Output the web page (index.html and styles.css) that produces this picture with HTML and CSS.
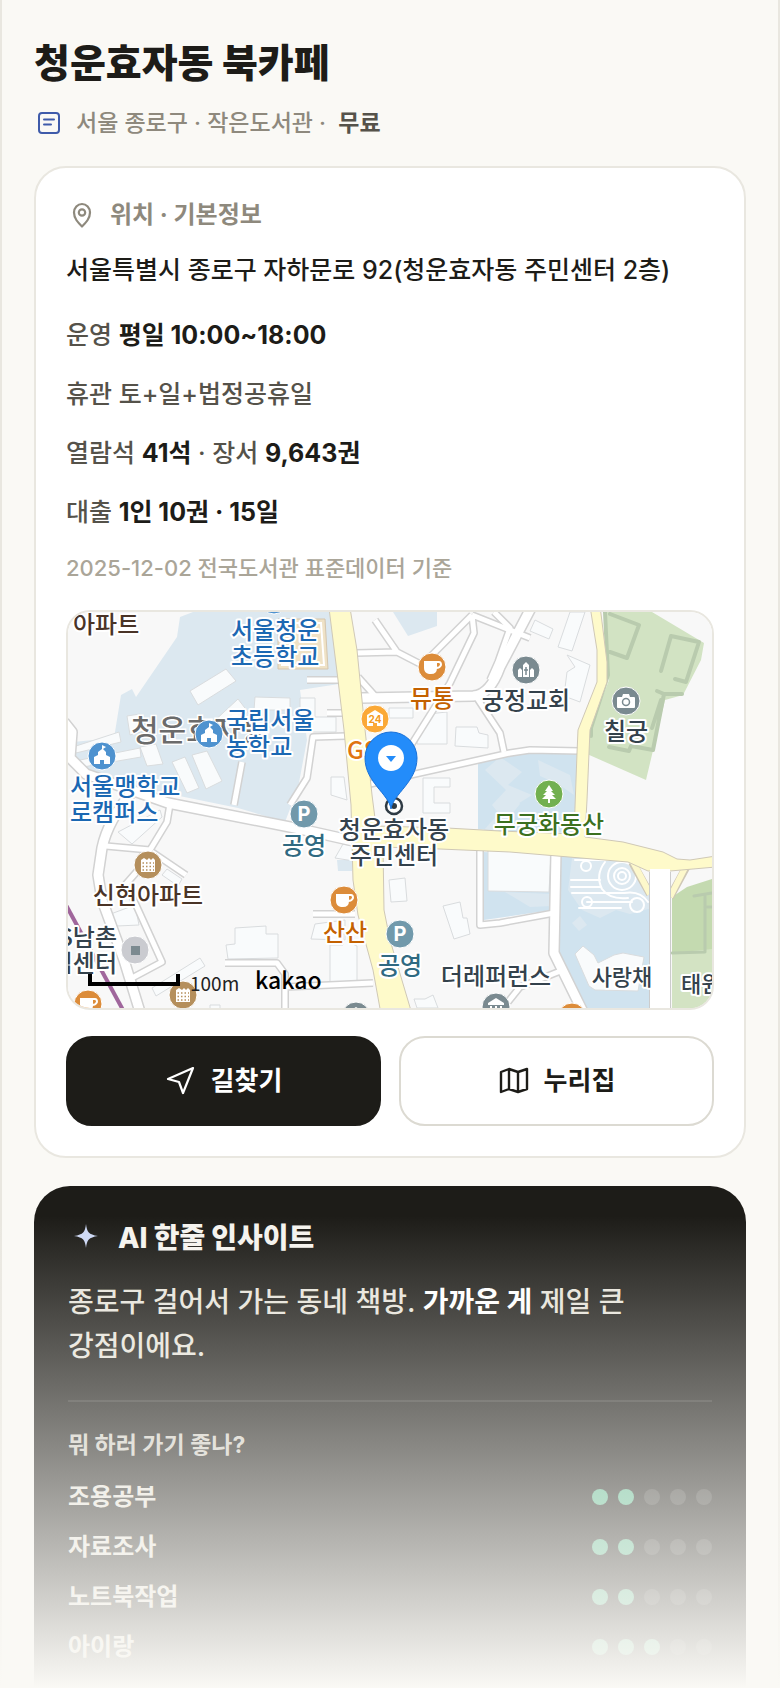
FILE: index.html
```html
<!DOCTYPE html>
<html lang="ko">
<head>
  <meta charset="UTF-8">
  <title>청운효자동 북카페</title>
  <meta name="viewport" content="width=device-width, initial-scale=1.0">
  <link rel="stylesheet" href="styles.css">
</head>
<body>
  <main class="page">
    <h1>청운효자동 북카페</h1>
    <p class="sub">
      <svg class="sub-icon" viewBox="0 0 30 30" fill="none" stroke="currentColor" stroke-width="2" stroke-linecap="round">
        <rect x="5" y="5" width="20" height="20" rx="3"/>
        <path d="M10 11.5h10M10 16.5h7"/>
      </svg>
      <span>서울 종로구 · 작은도서관 · <b>무료</b></span>
    </p>

    <section class="card">
      <h2 class="card-title">
        <svg viewBox="0 0 32 32" fill="none" stroke="currentColor" stroke-width="2.2" stroke-linejoin="round">
          <path d="M16 27.5C12 23.500 8 19.500 8 13.500a8 8.500 0 0 1 16 0C24 19.500 20 23.500 16 27.500z"/>
          <circle cx="16" cy="13.500" r="3.200"/>
        </svg>
        위치 · 기본정보
      </h2>
      <p class="address">서울특별시 종로구 자하문로 92(청운효자동 주민센터 2층)</p>
      <div class="info">
        <p>운영 <b>평일 10:00~18:00</b></p>
        <p>휴관 토+일+법정공휴일</p>
        <p>열람석 <b>41석</b> · 장서 <b>9,643권</b></p>
        <p>대출 <b>1인 10권 · 15일</b></p>
      </div>
      <p class="source">2025-12-02 전국도서관 표준데이터 기준</p>

      <div class="map">
        <svg viewBox="8 12 644 396" preserveAspectRatio="xMidYMid slice">
          <defs>
            <g id="lanes">
              <path d="M182 162L174 205M247 80H282M267 113H285M286 136L253 137L247 178L230 205"/>
              <path d="M296 53L337 52L368 68M315 20L337 52M412 15L365 62M412 15L414 33L390 83L343 158M412 15L470 38M298 77L315 96"/>
              <path d="M434 12L450 28L438 62L430 80M417 98L440 133L444 152"/>
              <path d="M46 246L90 250L107 222L110 204M92 252L126 275M80 268L66 284L76 305L102 362L72 378"/>
              <path d="M253 314H295M165 363H217L225 374V408M225 387L313 383"/>
              <path d="M420 248V325L440 323L494 313M448 402L460 387L503 370"/>
              <path d="M310 184L450 153L470 150L520 151"/>
            </g>
            <g id="streets">
              <path d="M4 122L12 132L10 158L26 174L60 186L108 203L240 229L298 242"/>
              <path d="M72 192Q48 220 42 248L38 275L42 300L64 360L80 412"/>
              <path d="M472 6L440 67Q430 95 413 96L301 98M496 252L494 353L523 412"/>
            </g>
            <path id="avenue" d="M269 8L278 80L284 130L291 205L293 280L298 315L313 370L321 414H352L330 340L324 310L323 247L380 249L450 252L568 262L588 271H610L656 267V256L630 260L617 259L603 252L563 242L525 237L527 200L529 153L530 130L547 82V62L540 6H530L537 50L537 82L518 130L517 153L514 234L440 231L387 228L316 226L312 195L304 120L297 50L290 8Z"/>
            <g id="school">
              <circle class="pin" r="14" fill="#4e92cf"/>
              <path fill="#fff" d="M-8 8V1L-4-1V-4L0-7V-11L4-9L1-7V-7L4-4V-1L8 1V8H2V4H-2V8Z"/>
            </g>
            <g id="coffee">
              <circle class="pin" r="14" fill="#dc8c3a"/>
              <path fill="#fff" d="M-8-6H5V1Q5 7-1 7H-3Q-8 6-8 1Z"/>
              <path fill="none" stroke="#fff" stroke-width="2" d="M4-5H7Q9-5 9-2Q8 1 4 1"/>
            </g>
            <g id="apartment">
              <circle class="pin" r="14" fill="#b58f5c"/>
              <path fill="#fff" d="M-7 7V-5L-4-7L-1-5L1-7L3-5L5-7L7-5V7Z"/>
              <path stroke="#b58f5c" stroke-width="1.500" stroke-dasharray="1.500 2" d="M-5.500-2H6M-5.500 1.500H6M-5.500 5H6"/>
            </g>
            <g id="museum">
              <circle class="pin" r="14" fill="#7a8a90"/>
              <path fill="#fff" d="M-8-4L0-9L8-4V-2H-8ZM-6-1H-4V5H-6ZM-1-1H1V5H-1ZM4-1H6V5H4ZM-8 5H8V7H-8Z"/>
            </g>
          </defs>

          <rect x="8" y="12" width="644" height="396" fill="#f8f8f8"/>

          <!-- 학교, 공원 부지 -->
          <g fill="#dce8f0">
            <path d="M133 12L120 17L117 37L76 97L72 89L61 95L54 138L13 142L14 165L30 178L100 192L178 208L225 222L238 188L247 140L240 90L279 84L270 12Z"/>
            <path d="M333 12H377V26L348 36ZM277 260H292V271H278Z"/>
          </g>
          <g fill="#d0e3ef">
            <path d="M418 159L455 154H517L514 233L440 231L418 229Z"/>
            <path d="M424 252L493 256L492 310L424 320Z"/>
            <path d="M500 255L568 262L592 295V408H522L498 353Z"/>
          </g>
          <g fill="#dce8f0">
            <path d="M440 157L462 172L448 185L472 195L440 215L432 205L446 190L425 170ZM478 160L510 175L514 195L498 184L480 176ZM424 230L455 195L460 204L438 231Z"/>
            <path d="M512 258L568 262L592 295V308L570 314L556 310L540 318L522 310L508 290ZM512 323L520 316L527 325L519 331ZM445 292L492 294V306L470 307Z"/>
          </g>
          <path fill="#d2e3c3" d="M544 12H592L644 43L641 60L623 95L605 100L586 180L527 154L530 130L549 80Z"/>
          <path fill="#c4dab0" d="M612 297L627 287L652 279V408H612Z"/>
          <path fill="#d3e3c3" d="M612 353L652 349V408H612Z"/>
          <g fill="none" stroke="#b9cbae" stroke-width="4" stroke-linecap="round" stroke-linejoin="round">
            <path d="M545 12L548 75L531 128V136M550 14L579 25L567 58L550 52"/>
            <path d="M601 71L611 36L639 42L626 82L615 79M597 91L604 94L622 94M604 94L593 150L571 146L569 151L549 147M601 100L592 128"/>
            <path stroke-width="3" d="M634 296L652 293M645 296V352L612 353M646 307H652"/>
          </g>
          <path fill="#efe2c6" stroke="#d5c6ae" d="M218 19H265L268 69H218Z"/>
          <path fill="none" stroke="#fff" stroke-width="2" d="M222 23H261L264 65H222Z"/>

          <!-- 건물 -->
          <g fill="#f9fbfc" stroke="#d9dcde" stroke-width="1">
            <path d="M130 91L166 69L176 81L138 105ZM195 97L230 98V110H194ZM150 125L178 99L188 112L155 135ZM67 116L80 114L84 131L70 135ZM80 147L96 144L103 164L87 166ZM112 162L125 157L139 188L127 193ZM132 155L147 151L162 181L146 189ZM13 147L59 132L61 142L16 153ZM20 160L80 148L81 157L23 167Z"/>
            <path d="M240 98H255V117H276V132H240ZM329 108H353V118H329ZM357 138L368 114L387 112V144H357ZM396 127H417L419 133L428 135V148L395 146ZM271 177H284L287 200L271 195ZM363 178H390V187H374V203H390V213H363ZM470 31L475 20L493 29L489 39ZM498 47L510 12H525L512 51ZM507 55L530 65L520 102L504 96L507 72L515 67Z"/>
            <path d="M58 232L100 210L102 217L72 244ZM102 275L107 269L122 279L118 286ZM48 315L75 305L79 325L57 326ZM166 345L175 344V328L206 326V334H218V358L168 359ZM92 388L140 358L145 366L96 396ZM270 345H283V334H288V342L297 346V382H270ZM329 280L345 278L347 301L331 302ZM383 306L400 302L403 318H407L410 334L394 339ZM251 339L255 324L285 320V340ZM275 258L283 244L302 248L300 262ZM428 250L491 254L489 292L428 291ZM515 354L523 346L534 355L538 363L554 355L563 353L584 357L578 391L535 390L529 386ZM354 399H365L373 395L378 408H357ZM150 405H160V412H150Z"/>
          </g>
          <g fill="none" stroke="#fff" stroke-width="2" stroke-linecap="round">
            <path d="M515 260H560M511 280H540M511 287H540M512 293H564M527 302H572M519 308H561M564 293Q580 290 588 302"/>
            <circle cx="526" cy="266" r="5"/>
            <circle cx="527" cy="302" r="5"/>
            <circle cx="577" cy="305" r="7"/>
            <circle cx="562" cy="276" r="4"/>
            <circle cx="562" cy="276" r="8"/>
            <circle cx="562" cy="276" r="14"/>
            <path d="M545 262Q535 275 542 289Q550 300 568 298"/>
          </g>

          <!-- 도로 -->
          <g fill="none" stroke-linejoin="round">
            <use href="#lanes" stroke="#d2d2d2" stroke-width="8"/>
            <use href="#streets" stroke="#d2d2d2" stroke-width="12"/>
            <use href="#lanes" stroke="#fff" stroke-width="5"/>
            <use href="#streets" stroke="#fff" stroke-width="9"/>
            <path stroke="#cfc8b6" stroke-width="8" d="M572 262L590 294M628 264L610 297"/>
            <path stroke="#fdf8cb" stroke-width="6" d="M572 260L590 294M628 262L610 297"/>
            <use href="#avenue" fill="#fefaca" stroke="#cfc8b6"/>
            <path stroke="#ccc" stroke-width="22" d="M600 272V410"/>
            <path stroke="#fff" stroke-width="20" d="M600 269V410"/>
            <path stroke="#a0669c" stroke-width="4" d="M6 305L63 410"/>
          </g>

          <text class="district" x="71" y="141">청운효자동</text>

          <!-- 장소 아이콘 -->
          <use href="#school" x="214" y="0"/>
          <use href="#school" x="149" y="134"/>
          <use href="#school" x="42" y="156"/>
          <use href="#coffee" x="372" y="67"/>
          <use href="#coffee" x="284" y="300"/>
          <use href="#coffee" x="28" y="404"/>
          <use href="#coffee" x="512" y="417"/>
          <use href="#apartment" x="88" y="265"/>
          <use href="#apartment" x="123" y="395"/>
          <use href="#museum" x="436" y="407"/>
          <use href="#museum" x="296" y="416"/>
          <g transform="translate(244 214)">
            <circle class="pin" r="14" fill="#7199ab"/>
            <text class="parking" y="7">P</text>
          </g>
          <g transform="translate(340 334)">
            <circle class="pin" r="14" fill="#7199ab"/>
            <text class="parking" y="7">P</text>
          </g>
          <g transform="translate(315 119)">
            <circle class="pin" r="14" fill="#fba937"/>
            <path fill="#fff" d="M-8-4L0-9L8-4V7H2V4H-2V7H-8Z"/>
            <text class="hours" y="4">24</text>
          </g>
          <g transform="translate(466 70)">
            <circle class="pin" r="14" fill="#7a8a90"/>
            <path fill="#fff" d="M-8 7V0L-6-2L-4 0V7ZM4 7V0L6-2L8 0V7ZM-3 7V-5L0-8L3-5V7Z"/>
            <path stroke="#7a8a90" stroke-width="1.500" d="M0-3V5M-2 0H2"/>
          </g>
          <g transform="translate(566 101)">
            <circle class="pin" r="14" fill="#7a8a90"/>
            <path fill="#fff" d="M-8-4H-4L-3-7H3L4-4H8Q9-4 9-3V6Q9 7 8 7H-8Q-9 7-9 6V-3Q-9-4-8-4Z"/>
            <circle cy="1" r="3.500" fill="none" stroke="#7a8a90" stroke-width="1.500"/>
          </g>
          <g transform="translate(489 194)">
            <circle class="pin" r="14" fill="#72b050"/>
            <path fill="#fff" d="M0-9L4-3H2L6 1H3L7 5H1V9H-1V5H-7L-3 1H-6L-2-3H-4Z"/>
          </g>
          <g transform="translate(75 350)">
            <circle class="pin" r="14" fill="#cacbd0"/>
            <path fill="#7c8a90" d="M-4-4H5V5H-4Z"/>
          </g>

          <circle cx="334" cy="206" r="8" fill="#fff" stroke="#2f3b44" stroke-width="2.500"/>
          <circle cx="334" cy="206" r="3" fill="#2f3b44"/>

          <g class="label">
            <text class="house" x="13" y="33">아파트</text>
            <text class="edu" x="171" y="39">서울청운<tspan x="171" dy="26">초등학교</tspan></text>
            <text class="edu" x="166" y="129">국립서울<tspan x="166" dy="26">농학교</tspan></text>
            <text class="edu" x="10" y="195">서울맹학교<tspan x="10" dy="26">로캠퍼스</tspan></text>
            <text class="store" x="287" y="159">GS25</text>
            <text x="57" y="346" text-anchor="end">S남촌<tspan x="57" dy="26">립센터</tspan></text>
            <text class="small" x="621" y="392">태원</text>
            <g text-anchor="middle">
              <text class="cafe" x="372" y="107">뮤통</text>
              <text class="cafe" x="285" y="341">산산</text>
              <text x="466" y="109">궁정교회</text>
              <text x="566" y="140">칠궁</text>
              <text class="park" x="489" y="233">무궁화동산</text>
              <text x="334" y="238">청운효자동<tspan x="334" dy="26">주민센터</tspan></text>
              <text class="lot" x="244" y="254">공영</text>
              <text class="lot" x="340" y="374">공영</text>
              <text class="house" x="88" y="304">신현아파트</text>
              <text x="436" y="385">더레퍼런스</text>
              <text class="small" x="562" y="385">사랑채</text>
            </g>
          </g>

          <path fill="#238cfa" stroke="#1870d8" d="M331 209C329 194 305 182 305 158A26 26 0 0 1 357 158C357 182 333 194 331 209Z"/>
          <circle cx="331" cy="158" r="13" fill="#fff"/>
          <path fill="#238cfa" d="M326 156H336L331 162Z"/>

          <path fill="none" stroke="#000" stroke-width="4" d="M30 374V384H118V374"/>
          <text class="scale" x="130" y="391">100m</text>
          <text class="brand" x="195" y="389">kakao</text>
        </svg>
      </div>

      <div class="actions">
        <a class="btn btn-dark" href="#route">
          <svg viewBox="0 0 32 32" fill="none" stroke="currentColor" stroke-width="2.200" stroke-linejoin="round">
            <path d="M28 3L3 14L14 17L18 28Z"/>
          </svg>
          길찾기
        </a>
        <a class="btn" href="#home">
          <svg viewBox="0 0 32 32" fill="none" stroke="currentColor" stroke-width="2.400" stroke-linejoin="round">
            <path d="M3 7L11 4L20 7L29 4V24L20 27L11 24L3 27ZM11 4V24M20 7V27"/>
          </svg>
          누리집
        </a>
      </div>
    </section>

    <section class="insight">
      <h2 class="insight-title">
        <svg viewBox="0 0 36 36" fill="#cdd8f5">
          <path d="M18 4C19 12 20.500 14.500 30 16C20.500 17.500 19 20 18 28C17 20 15.500 17.500 6 16C15.500 14.500 17 12 18 4Z"/>
        </svg>
        AI 한줄 인사이트
      </h2>
      <p class="insight-text">종로구 걸어서 가는 동네 책방. <b>가까운 게</b> 제일 큰 강점이에요.</p>
      <div class="scores">
        <h3>뭐 하러 가기 좋나?</h3>
        <div class="score"><span>조용공부</span><span class="dots"><i class="on"></i><i class="on"></i><i></i><i></i><i></i></span></div>
        <div class="score"><span>자료조사</span><span class="dots"><i class="on"></i><i class="on"></i><i></i><i></i><i></i></span></div>
        <div class="score"><span>노트북작업</span><span class="dots"><i class="on"></i><i class="on"></i><i></i><i></i><i></i></span></div>
        <div class="score"><span>아이랑</span><span class="dots"><i class="on"></i><i class="on"></i><i class="on"></i><i></i><i></i></span></div>
      </div>
    </section>
    <div class="fade"></div>
  </main>
</body>
</html>
```
FILE: styles.css
```css
:root {
  --bg: #faf9f5;
  --ink: #1d1c18;
  --sub: #55524a;
  --muted: #8e897d;
  --line: #e9e7e0;
}

* {
  box-sizing: border-box;
  margin: 0;
  padding: 0;
}

body {
  font-family: Inter, "Noto Sans CJK KR", sans-serif;
  font-size: 24px;
  font-weight: 500;
  background: var(--bg);
  color: var(--ink);
  word-break: keep-all;
}

.page {
  position: relative;
  display: flex;
  flex-direction: column;
  min-height: 100vh;
  padding: 38px 32px 0;
  border: solid var(--line);
  border-width: 0 2px;
}

h1 {
  font-size: 39px;
  font-weight: 800;
  line-height: 50px;
}

.sub {
  display: flex;
  align-items: center;
  gap: 12px;
  margin-top: 17px;
  font-size: 23px;
  line-height: 36px;
  color: var(--muted);
}

.sub b {
  margin-left: 6px;
  font-weight: 600;
  color: var(--sub);
}

.sub-icon {
  width: 30px;
  height: 30px;
  color: #3f5baa;
}

.card {
  margin-top: 25px;
  padding: 30px;
  background: #fff;
  border: 2px solid var(--line);
  border-radius: 32px;
}

.card-title {
  display: flex;
  align-items: center;
  gap: 12px;
  font-size: 24px;
  font-weight: 700;
  line-height: 34px;
  color: var(--muted);
}

.card-title svg {
  width: 32px;
  height: 32px;
}

.address {
  margin-top: 18px;
  font-size: 25px;
  line-height: 40px;
}

.info {
  display: flex;
  flex-direction: column;
  gap: 19px;
  margin-top: 25px;
  font-size: 25px;
  line-height: 40px;
  color: var(--sub);
}

.info b {
  font-weight: 700;
  color: var(--ink);
}

.source {
  margin-top: 19px;
  font-size: 22px;
  line-height: 34px;
  color: #aaa598;
}

.map {
  height: 400px;
  margin-top: 25px;
  border: 2px solid var(--line);
  border-radius: 24px;
  overflow: hidden;
}

.map svg {
  display: block;
  width: 100%;
  height: 100%;
  font-family: "Noto Sans CJK KR", sans-serif;
}

.label {
  font-size: 24px;
  font-weight: 500;
  fill: #34424c;
  stroke: #fff;
  stroke-width: 4px;
  stroke-linejoin: round;
  paint-order: stroke;
}

.label .edu { fill: #1b68b3; }
.label .cafe { fill: #c46100; }
.label .store { fill: #e07410; }
.label .park { fill: #3c701f; }
.label .lot { fill: #306a82; }
.label .house { fill: #4a3427; }
.label .small { font-size: 22px; }

.district {
  font-size: 30px;
  font-weight: 500;
  fill: #6b6b6b;
  stroke: #fff;
  stroke-width: 3px;
  paint-order: stroke;
}

.pin {
  stroke: #fff;
  stroke-width: 1px;
}

.parking,
.hours {
  font-family: Inter, sans-serif;
  font-weight: 700;
  text-anchor: middle;
}

.parking {
  font-size: 20px;
  fill: #fff;
}

.hours {
  font-size: 10px;
  fill: #f39a20;
}

.scale {
  font-size: 19px;
  font-weight: 400;
  fill: #222;
}

.brand {
  font-size: 23px;
}

.actions {
  display: flex;
  gap: 18px;
  margin-top: 26px;
}

.btn {
  flex: 1;
  display: flex;
  align-items: center;
  justify-content: center;
  gap: 14px;
  height: 90px;
  font-size: 26px;
  font-weight: 700;
  line-height: 34px;
  color: var(--ink);
  text-decoration: none;
  border: 2px solid #dcdad2;
  border-radius: 26px;
}

.btn-dark {
  color: #fff;
  background: var(--ink);
  border-color: var(--ink);
}

.btn svg {
  width: 32px;
  height: 32px;
}

.insight {
  flex: 1;
  margin-top: 28px;
  padding: 34px 34px 0;
  color: #e6e3da;
  background: var(--ink);
  border-radius: 36px 36px 0 0;
}

.insight-title {
  display: flex;
  align-items: center;
  gap: 14px;
  font-size: 28px;
  font-weight: 800;
  line-height: 34px;
  color: #f5f3ee;
}

.insight-title svg {
  width: 36px;
  height: 36px;
}

.insight-text {
  margin-top: 24px;
  font-size: 28px;
  line-height: 44px;
}

.insight-text b {
  color: #fff;
}

.scores {
  display: flex;
  flex-direction: column;
  gap: 20px;
  margin-top: 32px;
  padding-top: 26px;
  border-top: 2px solid rgba(255, 255, 255, 0.1);
}

.scores h3 {
  font-size: 23px;
  font-weight: 700;
  line-height: 34px;
  color: #cfccc3;
}

.score {
  display: flex;
  align-items: center;
  justify-content: space-between;
  font-weight: 600;
  line-height: 30px;
}

.dots {
  display: flex;
  gap: 10px;
}

.dots i {
  width: 16px;
  height: 16px;
  border-radius: 50%;
  background: rgba(255, 255, 255, 0.14);
}

.dots .on {
  background: #5ab98f;
}

/* 하단으로 갈수록 배경색으로 흐려짐 */
.fade {
  position: absolute;
  left: -2px;
  right: -2px;
  bottom: 0;
  height: 472px;
  background: linear-gradient(rgba(250, 249, 245, 0), var(--bg));
  pointer-events: none;
}
```
